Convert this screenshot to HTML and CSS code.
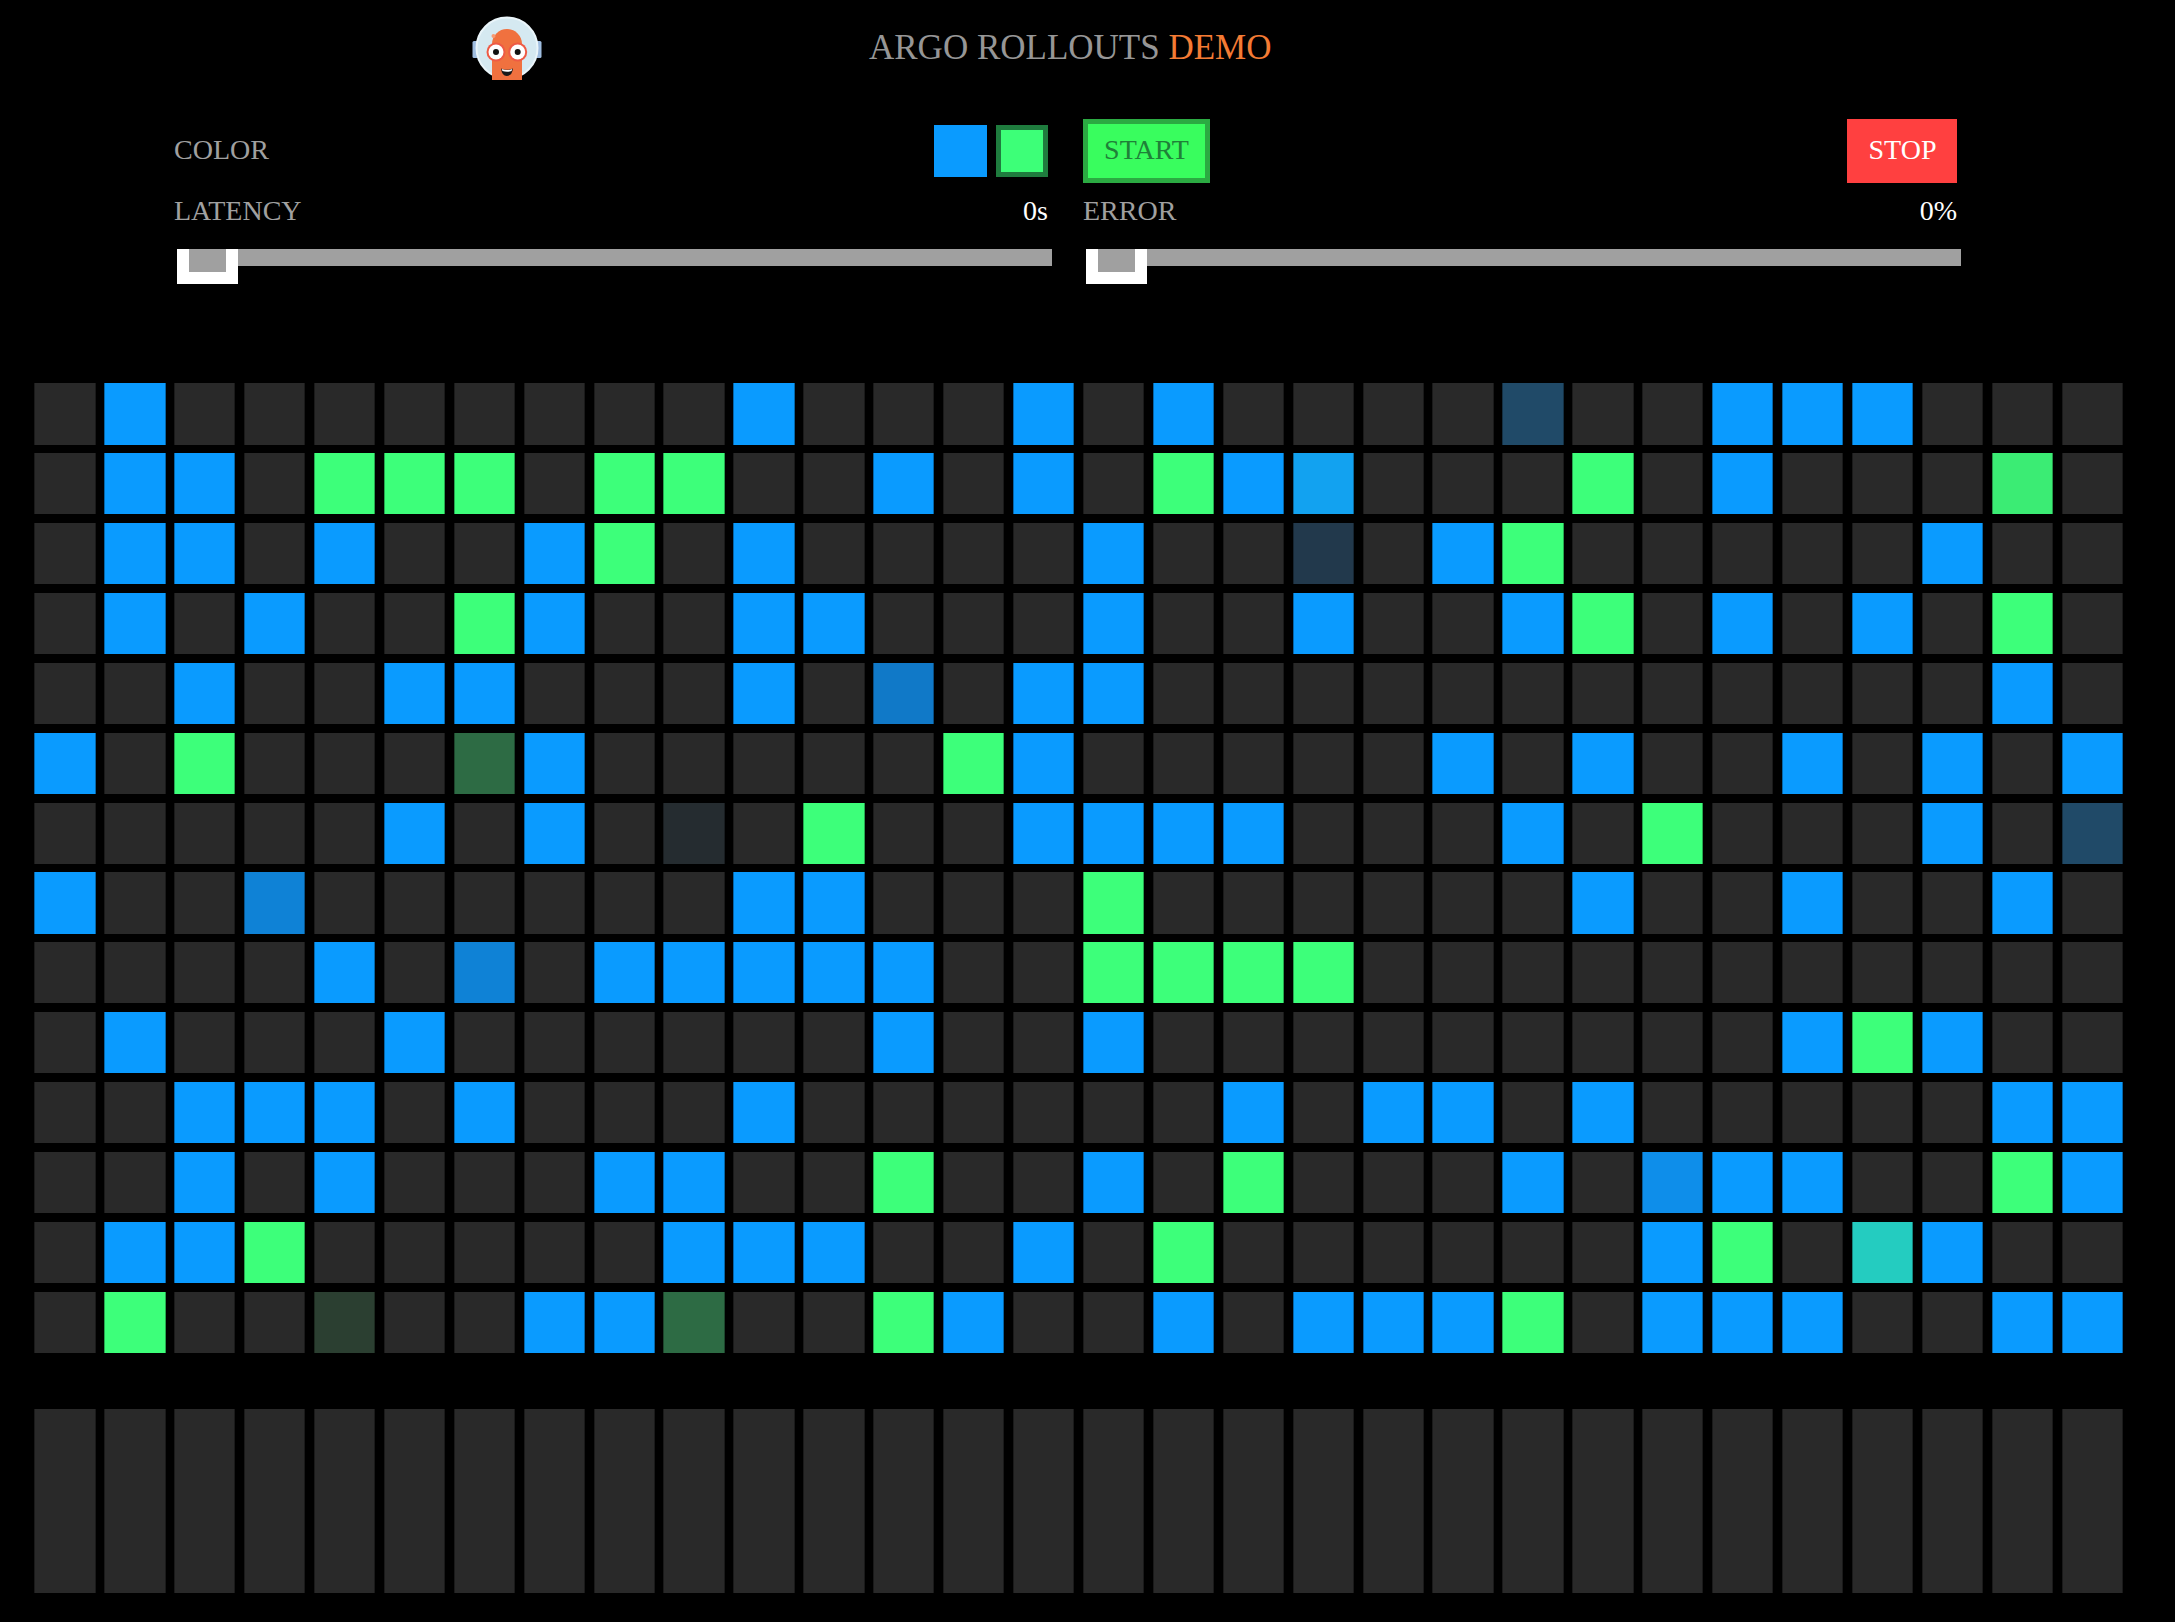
FILE: index.html
```html
<!DOCTYPE html>
<html lang="en">
<head>
<meta charset="utf-8">
<title>Argo Rollouts Demo</title>
<link rel="stylesheet" href="styles.css">
</head>
<body>
<header class="header">
<svg class="logo" viewBox="0 0 70 66" width="70" height="66" aria-label="Argo logo">
<defs><clipPath id="cut"><rect x="0" y="0" width="70" height="64"/></clipPath></defs>
<rect x="0.500" y="25" width="6" height="17" rx="1.5" fill="#9fbde0"/>
<rect x="63.500" y="25" width="6" height="17" rx="1.5" fill="#9fbde0"/>
<g clip-path="url(#cut)">
<circle cx="35" cy="32" r="30.500" fill="#d5e9f1" stroke="#eaf5fa" stroke-width="2"/>
<path d="M20 64V28a15 15 0 0 1 30 0V64Z" fill="#f0713f"/>
</g>
<circle cx="21.500" cy="20" r="2" fill="#f79a72"/>
<circle cx="24" cy="36" r="9.500" fill="#ee5a45"/>
<circle cx="24" cy="36" r="7.500" fill="#fff"/>
<circle cx="24" cy="36" r="3" fill="#111"/>
<circle cx="45.700" cy="36" r="9.500" fill="#ee5a45"/>
<circle cx="45.700" cy="36" r="7.500" fill="#fff"/>
<circle cx="45.700" cy="36" r="3" fill="#111"/>
<path d="M29 52.500Q35 55 41 52.500Q40 60 34.700 60Q30 60 29 52.500Z" fill="#1a1a1a"/>
<path d="M29.800 53Q35 55 40.200 53L39.600 55Q35 56.500 30.400 55Z" fill="#fff"/>
</svg>
<h1 class="title">ARGO ROLLOUTS <span class="title-accent">DEMO</span></h1>
</header>

<section class="controls">
<div class="panel">
<div class="row-top">
<span class="label label-top">COLOR</span>
<div class="swatches">
<div class="swatch swatch-blue"></div>
<div class="swatch swatch-green"></div>
</div>
</div>
<div class="row-value"><span class="label">LATENCY</span><span class="value">0s</span></div>
<div class="slider"><div class="handle"></div></div>
</div>
<div class="panel">
<div class="row-top">
<button class="btn btn-start">START</button>
<button class="btn btn-stop">STOP</button>
</div>
<div class="row-value"><span class="label">ERROR</span><span class="value">0%</span></div>
<div class="slider"><div class="handle"></div></div>
</div>
</section>

<main class="grid">
<!-- row 1 -->
<div class="c"></div><div class="c blue"></div><div class="c"></div><div class="c"></div><div class="c"></div><div class="c"></div><div class="c"></div><div class="c"></div><div class="c"></div><div class="c"></div><div class="c blue"></div><div class="c"></div><div class="c"></div><div class="c"></div><div class="c blue"></div><div class="c"></div><div class="c blue"></div><div class="c"></div><div class="c"></div><div class="c"></div><div class="c"></div><div class="c fade-blue-a"></div><div class="c"></div><div class="c"></div><div class="c blue"></div><div class="c blue"></div><div class="c blue"></div><div class="c"></div><div class="c"></div><div class="c"></div>
<!-- row 2 -->
<div class="c"></div><div class="c blue"></div><div class="c blue"></div><div class="c"></div><div class="c green"></div><div class="c green"></div><div class="c green"></div><div class="c"></div><div class="c green"></div><div class="c green"></div><div class="c"></div><div class="c"></div><div class="c blue"></div><div class="c"></div><div class="c blue"></div><div class="c"></div><div class="c green"></div><div class="c blue"></div><div class="c light-blue"></div><div class="c"></div><div class="c"></div><div class="c"></div><div class="c green"></div><div class="c"></div><div class="c blue"></div><div class="c"></div><div class="c"></div><div class="c"></div><div class="c soft-green"></div><div class="c"></div>
<!-- row 3 -->
<div class="c"></div><div class="c blue"></div><div class="c blue"></div><div class="c"></div><div class="c blue"></div><div class="c"></div><div class="c"></div><div class="c blue"></div><div class="c green"></div><div class="c"></div><div class="c blue"></div><div class="c"></div><div class="c"></div><div class="c"></div><div class="c"></div><div class="c blue"></div><div class="c"></div><div class="c"></div><div class="c fade-blue-b"></div><div class="c"></div><div class="c blue"></div><div class="c green"></div><div class="c"></div><div class="c"></div><div class="c"></div><div class="c"></div><div class="c"></div><div class="c blue"></div><div class="c"></div><div class="c"></div>
<!-- row 4 -->
<div class="c"></div><div class="c blue"></div><div class="c"></div><div class="c blue"></div><div class="c"></div><div class="c"></div><div class="c green"></div><div class="c blue"></div><div class="c"></div><div class="c"></div><div class="c blue"></div><div class="c blue"></div><div class="c"></div><div class="c"></div><div class="c"></div><div class="c blue"></div><div class="c"></div><div class="c"></div><div class="c blue"></div><div class="c"></div><div class="c"></div><div class="c blue"></div><div class="c green"></div><div class="c"></div><div class="c blue"></div><div class="c"></div><div class="c blue"></div><div class="c"></div><div class="c green"></div><div class="c"></div>
<!-- row 5 -->
<div class="c"></div><div class="c"></div><div class="c blue"></div><div class="c"></div><div class="c"></div><div class="c blue"></div><div class="c blue"></div><div class="c"></div><div class="c"></div><div class="c"></div><div class="c blue"></div><div class="c"></div><div class="c mid-blue-a"></div><div class="c"></div><div class="c blue"></div><div class="c blue"></div><div class="c"></div><div class="c"></div><div class="c"></div><div class="c"></div><div class="c"></div><div class="c"></div><div class="c"></div><div class="c"></div><div class="c"></div><div class="c"></div><div class="c"></div><div class="c"></div><div class="c blue"></div><div class="c"></div>
<!-- row 6 -->
<div class="c blue"></div><div class="c"></div><div class="c green"></div><div class="c"></div><div class="c"></div><div class="c"></div><div class="c fade-green-a"></div><div class="c blue"></div><div class="c"></div><div class="c"></div><div class="c"></div><div class="c"></div><div class="c"></div><div class="c green"></div><div class="c blue"></div><div class="c"></div><div class="c"></div><div class="c"></div><div class="c"></div><div class="c"></div><div class="c blue"></div><div class="c"></div><div class="c blue"></div><div class="c"></div><div class="c"></div><div class="c blue"></div><div class="c"></div><div class="c blue"></div><div class="c"></div><div class="c blue"></div>
<!-- row 7 -->
<div class="c"></div><div class="c"></div><div class="c"></div><div class="c"></div><div class="c"></div><div class="c blue"></div><div class="c"></div><div class="c blue"></div><div class="c"></div><div class="c faint-blue"></div><div class="c"></div><div class="c green"></div><div class="c"></div><div class="c"></div><div class="c blue"></div><div class="c blue"></div><div class="c blue"></div><div class="c blue"></div><div class="c"></div><div class="c"></div><div class="c"></div><div class="c blue"></div><div class="c"></div><div class="c green"></div><div class="c"></div><div class="c"></div><div class="c"></div><div class="c blue"></div><div class="c"></div><div class="c fade-blue-a"></div>
<!-- row 8 -->
<div class="c blue"></div><div class="c"></div><div class="c"></div><div class="c mid-blue-b"></div><div class="c"></div><div class="c"></div><div class="c"></div><div class="c"></div><div class="c"></div><div class="c"></div><div class="c blue"></div><div class="c blue"></div><div class="c"></div><div class="c"></div><div class="c"></div><div class="c green"></div><div class="c"></div><div class="c"></div><div class="c"></div><div class="c"></div><div class="c"></div><div class="c"></div><div class="c blue"></div><div class="c"></div><div class="c"></div><div class="c blue"></div><div class="c"></div><div class="c"></div><div class="c blue"></div><div class="c"></div>
<!-- row 9 -->
<div class="c"></div><div class="c"></div><div class="c"></div><div class="c"></div><div class="c blue"></div><div class="c"></div><div class="c mid-blue-b"></div><div class="c"></div><div class="c blue"></div><div class="c blue"></div><div class="c blue"></div><div class="c blue"></div><div class="c blue"></div><div class="c"></div><div class="c"></div><div class="c green"></div><div class="c green"></div><div class="c green"></div><div class="c green"></div><div class="c"></div><div class="c"></div><div class="c"></div><div class="c"></div><div class="c"></div><div class="c"></div><div class="c"></div><div class="c"></div><div class="c"></div><div class="c"></div><div class="c"></div>
<!-- row 10 -->
<div class="c"></div><div class="c blue"></div><div class="c"></div><div class="c"></div><div class="c"></div><div class="c blue"></div><div class="c"></div><div class="c"></div><div class="c"></div><div class="c"></div><div class="c"></div><div class="c"></div><div class="c blue"></div><div class="c"></div><div class="c"></div><div class="c blue"></div><div class="c"></div><div class="c"></div><div class="c"></div><div class="c"></div><div class="c"></div><div class="c"></div><div class="c"></div><div class="c"></div><div class="c"></div><div class="c blue"></div><div class="c green"></div><div class="c blue"></div><div class="c"></div><div class="c"></div>
<!-- row 11 -->
<div class="c"></div><div class="c"></div><div class="c blue"></div><div class="c blue"></div><div class="c blue"></div><div class="c"></div><div class="c blue"></div><div class="c"></div><div class="c"></div><div class="c"></div><div class="c blue"></div><div class="c"></div><div class="c"></div><div class="c"></div><div class="c"></div><div class="c"></div><div class="c"></div><div class="c blue"></div><div class="c"></div><div class="c blue"></div><div class="c blue"></div><div class="c"></div><div class="c blue"></div><div class="c"></div><div class="c"></div><div class="c"></div><div class="c"></div><div class="c"></div><div class="c blue"></div><div class="c blue"></div>
<!-- row 12 -->
<div class="c"></div><div class="c"></div><div class="c blue"></div><div class="c"></div><div class="c blue"></div><div class="c"></div><div class="c"></div><div class="c"></div><div class="c blue"></div><div class="c blue"></div><div class="c"></div><div class="c"></div><div class="c green"></div><div class="c"></div><div class="c"></div><div class="c blue"></div><div class="c"></div><div class="c green"></div><div class="c"></div><div class="c"></div><div class="c"></div><div class="c blue"></div><div class="c"></div><div class="c mid-blue-c"></div><div class="c blue"></div><div class="c blue"></div><div class="c"></div><div class="c"></div><div class="c green"></div><div class="c blue"></div>
<!-- row 13 -->
<div class="c"></div><div class="c blue"></div><div class="c blue"></div><div class="c green"></div><div class="c"></div><div class="c"></div><div class="c"></div><div class="c"></div><div class="c"></div><div class="c blue"></div><div class="c blue"></div><div class="c blue"></div><div class="c"></div><div class="c"></div><div class="c blue"></div><div class="c"></div><div class="c green"></div><div class="c"></div><div class="c"></div><div class="c"></div><div class="c"></div><div class="c"></div><div class="c"></div><div class="c blue"></div><div class="c green"></div><div class="c"></div><div class="c teal"></div><div class="c blue"></div><div class="c"></div><div class="c"></div>
<!-- row 14 -->
<div class="c"></div><div class="c green"></div><div class="c"></div><div class="c"></div><div class="c fade-green-b"></div><div class="c"></div><div class="c"></div><div class="c blue"></div><div class="c blue"></div><div class="c fade-green-a"></div><div class="c"></div><div class="c"></div><div class="c green"></div><div class="c blue"></div><div class="c"></div><div class="c"></div><div class="c blue"></div><div class="c"></div><div class="c blue"></div><div class="c blue"></div><div class="c blue"></div><div class="c green"></div><div class="c"></div><div class="c blue"></div><div class="c blue"></div><div class="c blue"></div><div class="c"></div><div class="c"></div><div class="c blue"></div><div class="c blue"></div>
</main>

<section class="bars">
<div class="c"></div><div class="c"></div><div class="c"></div><div class="c"></div><div class="c"></div><div class="c"></div><div class="c"></div><div class="c"></div><div class="c"></div><div class="c"></div>
<div class="c"></div><div class="c"></div><div class="c"></div><div class="c"></div><div class="c"></div><div class="c"></div><div class="c"></div><div class="c"></div><div class="c"></div><div class="c"></div>
<div class="c"></div><div class="c"></div><div class="c"></div><div class="c"></div><div class="c"></div><div class="c"></div><div class="c"></div><div class="c"></div><div class="c"></div><div class="c"></div>
</section>
</body>
</html>
```

FILE: styles.css
```css
* {
  box-sizing: border-box;
}

html,
body {
  margin: 0;
  background: #000;
}

body {
  height: 1622px;
  overflow: hidden;
  font-family: "Liberation Serif", "Times New Roman", serif;
  color: #a0a0a0;
}

.header {
  display: flex;
  align-items: flex-start;
  height: 119px;
  padding: 16px 0 0 472px;
}

.logo {
  flex: none;
}

.title {
  margin: 8px 0 0 327px;
  font-size: 35px;
  font-weight: 400;
  line-height: 48px;
  color: #969696;
}

.title-accent {
  color: #f47b34;
}

.controls {
  display: grid;
  grid-template-columns: 874px 874px;
  column-gap: 35px;
  padding-left: 174px;
}

.panel {
  display: flex;
  flex-direction: column;
}

.row-top {
  display: flex;
  align-items: center;
  justify-content: space-between;
  height: 64px;
}

.row-value {
  display: flex;
  align-items: center;
  justify-content: space-between;
  height: 56px;
}

.label,
.value,
.btn {
  font-family: inherit;
  font-size: 28px;
  line-height: 32px;
}

.label-top {
  margin-bottom: 2px;
}

.value {
  color: #fff;
}

.swatches {
  display: flex;
  gap: 9px;
}

.swatch {
  height: 52px;
}

.swatch-blue {
  width: 53px;
  background: #0a9bff;
}

.swatch-green {
  width: 52px;
  background: #3dff78;
  border: 5px solid #1f7c3e;
}

.btn {
  height: 64px;
  padding: 0 0 2px;
  border: 5px solid transparent;
  border-radius: 0;
}

.btn-start {
  width: 127px;
  background: #39fd5e;
  border-color: #2baa42;
  color: #1f8038;
}

.btn-stop {
  width: 110px;
  padding-left: 1px;
  background: #ff4040;
  border-color: #ff4040;
  color: #fff;
}

.slider {
  position: relative;
  width: 875px;
  height: 17px;
  margin: 10px 0 0 3.3px;
  background: #a0a0a0;
}

.handle {
  position: absolute;
  top: 0;
  left: 0;
  width: 61px;
  height: 35px;
  background: #a0a0a0;
  border: 12px solid #fff;
  border-top: 0;
}

.grid,
.bars {
  display: grid;
  grid-template-columns: repeat(30, 61.3px);
  column-gap: 8.62px;
  padding-left: 34.3px;
}

.grid {
  grid-auto-rows: 61.25px;
  row-gap: 8.62px;
  margin-top: 117.35px;
}

.bars {
  grid-auto-rows: 184px;
  margin-top: 56.1px;
}

.c {
  background: #292929;
  box-shadow: inset 1px 0 rgba(0, 0, 0, 0.35), inset -1px 0 rgba(0, 0, 0, 0.35);
}

.blue {
  background: #0a9bff;
}

.green {
  background: #3dff7a;
}

.soft-green {
  background: #3bec74;
}

.light-blue {
  background: #12a2f0;
}

.mid-blue-a {
  background: #1079c8;
}

.mid-blue-b {
  background: #0f82d6;
}

.mid-blue-c {
  background: #0e8eea;
}

.fade-blue-a {
  background: #204a68;
}

.fade-blue-b {
  background: #22394c;
}

.faint-blue {
  background: #252c30;
}

.fade-green-a {
  background: #2d6b44;
}

.fade-green-b {
  background: #2b3f31;
}

.teal {
  background: #24ccc0;
}
```
